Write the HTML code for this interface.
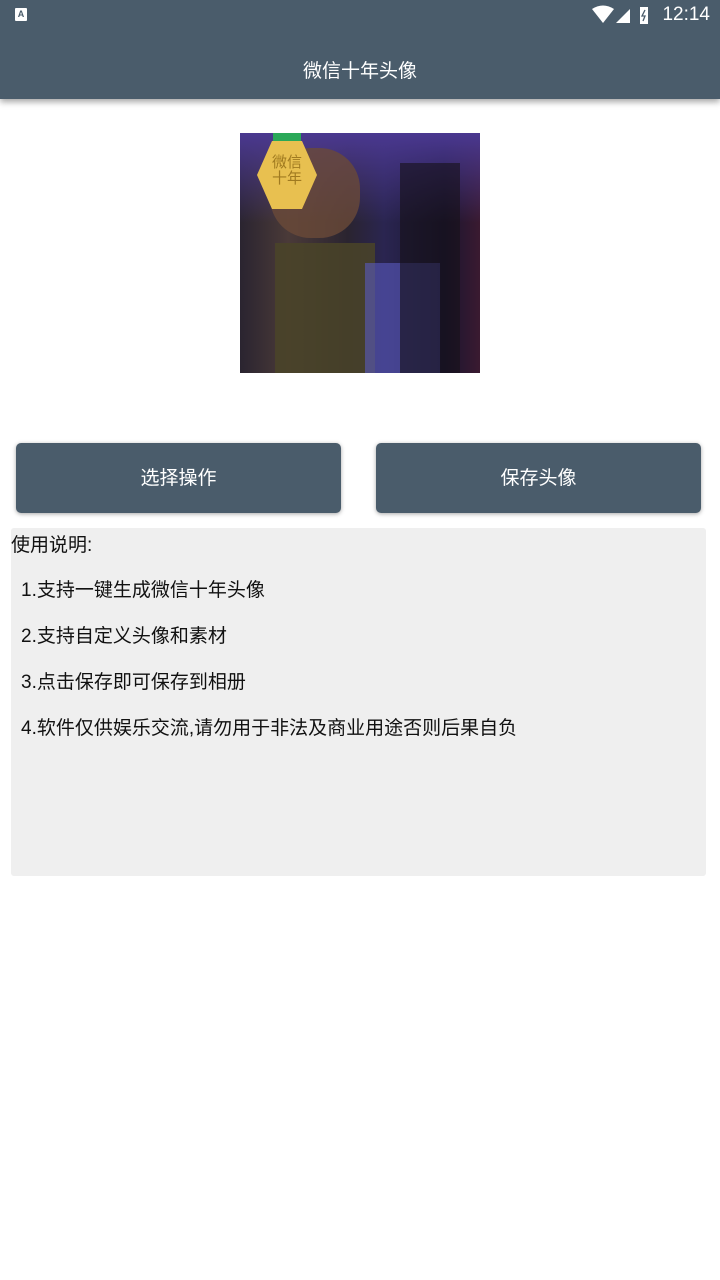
<!DOCTYPE html>
<html><head><meta charset="utf-8"><style>
*{margin:0;padding:0;box-sizing:border-box}
body{width:720px;height:1280px;background:#fff;font-family:"Liberation Sans","Noto Sans CJK SC",sans-serif;position:relative;overflow:hidden}
.bar{position:absolute;left:0;top:0;width:720px;height:99px;background:#4a5c6b;box-shadow:0 3px 6px rgba(0,0,0,.35)}
.title{position:absolute;top:56px;width:100%;text-align:center;color:#fff;font-size:19px}
.time{position:absolute;right:10px;top:4px;color:#fff;font-size:19px}
.btn{position:absolute;top:443px;width:325px;height:70px;background:#4a5c6b;border-radius:5px;color:#fff;font-size:19px;text-align:center;line-height:72px;box-shadow:0 1px 4px rgba(0,0,0,.35)}
.box{position:absolute;left:11px;top:528px;width:695px;height:348px;background:#efefef;border-radius:3px;font-size:19px;color:#111}
.box div{position:absolute;white-space:nowrap}
</style></head><body>
<div class="bar">
<div style="position:absolute;left:15px;top:8px;width:12px;height:13px;background:#fff;border-radius:1px;font-size:9px;color:#4a5c6b;text-align:center;line-height:12px;font-weight:bold">A</div>
<svg style="position:absolute;left:592px;top:5px" width="60" height="20"><path d="M0 4 Q11 -3 22 4 L11 18Z" fill="#fff"/><path d="M24 18 L38 4 L38 18Z" fill="#fff"/><rect x="48" y="2" width="8" height="17" fill="#fff"/><path d="M53 5 L50 11 L53 11 L51 16" stroke="#4a5c6b" stroke-width="1.3" fill="none"/></svg>
<div class="time">12:14</div>
<div class="title">微信十年头像</div>
</div>
<div style="position:absolute;left:240px;top:133px;width:240px;height:240px;background:linear-gradient(90deg,#2a2430 0%,#4a3a38 20%,#2a2430 45%,#2a2550 60%,#1a1530 85%,#3a1a30 100%);overflow:hidden">
<div style="position:absolute;left:0;top:0;width:240px;height:90px;background:linear-gradient(180deg,#4a3890,rgba(60,40,120,0))"></div>
<div style="position:absolute;left:30px;top:15px;width:90px;height:90px;border-radius:45%;background:#6a4a38;opacity:.8"></div>
<div style="position:absolute;left:35px;top:110px;width:100px;height:130px;background:#4a4428;opacity:.85"></div>
<div style="position:absolute;left:125px;top:130px;width:75px;height:110px;background:#5a5ac0;opacity:.6"></div>
<div style="position:absolute;left:160px;top:30px;width:60px;height:210px;background:#151018;opacity:.6"></div>
<div style="position:absolute;left:33px;top:0;width:28px;height:10px;background:#2aa858"></div>
<div style="position:absolute;left:17px;top:8px;width:60px;height:68px;background:#e8c050;clip-path:polygon(25% 0,75% 0,100% 50%,75% 100%,25% 100%,0 50%);color:#a07a20;font-size:15px;text-align:center;line-height:16px;padding-top:14px">微信<br>十年</div>
</div>
<div class="btn" style="left:16px">选择操作</div>
<div class="btn" style="left:376px">保存头像</div>
<div class="box">
<div style="left:0;top:2px">使用说明:</div>
<div style="left:10px;top:47px">1.支持一键生成微信十年头像</div>
<div style="left:10px;top:93px">2.支持自定义头像和素材</div>
<div style="left:10px;top:139px">3.点击保存即可保存到相册</div>
<div style="left:10px;top:185px">4.软件仅供娱乐交流,请勿用于非法及商业用途否则后果自负</div>
</div>
</body></html>
